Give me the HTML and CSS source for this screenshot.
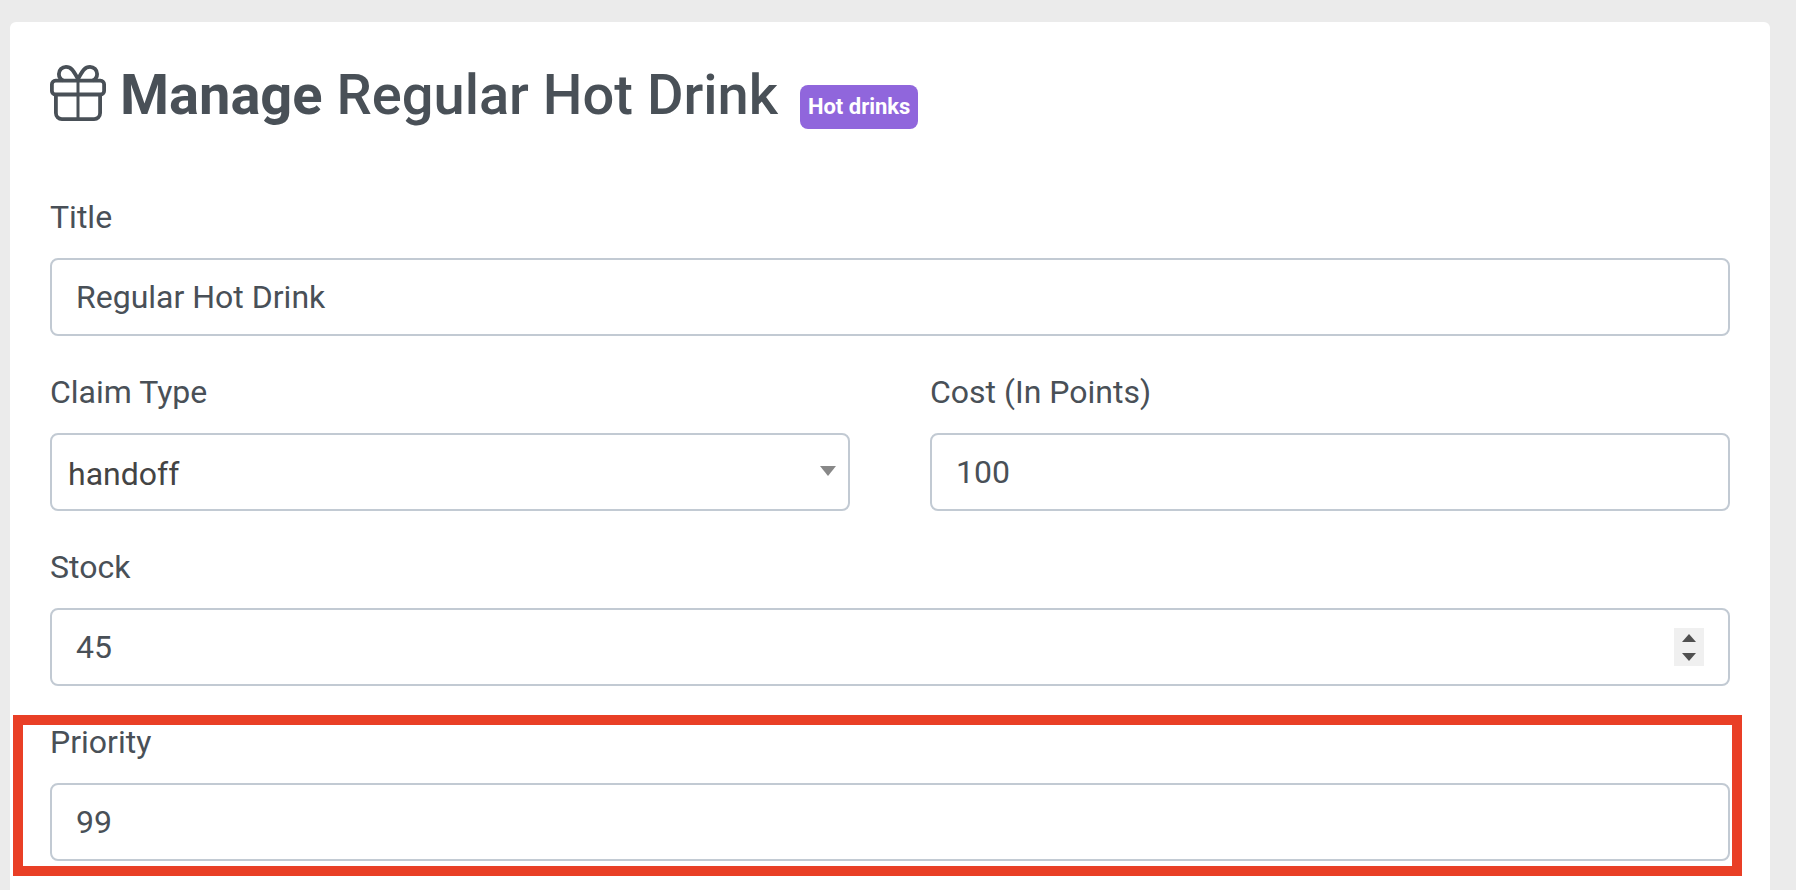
FILE: index.html
```html
<!DOCTYPE html>
<html lang="en">

<head>
    <meta charset="UTF-8">
    <meta name="viewport" content="width=device-width, initial-scale=1.0">
    <title>Manage Regular Hot Drink</title>
    <link rel="stylesheet" href="styles.css">
</head>

<body>
    <main class="card">
        <header class="card_header">
            <svg class="gift" viewBox="0 0 56 56" fill="none" stroke="currentColor" stroke-width="3.8" aria-hidden="true">
                <rect x="1.9" y="15.7" width="52.2" height="13.8" rx="3.6"/>
                <path d="M5.9 30v18.1a6 6 0 0 0 6 6h32.200a6 6 0 0 0 6-6V30"/>
                <path d="M28 13v41" stroke-width="3"/>
                <path d="M13 15.500C10.200 14 8.900 11.500 8.900 9c0-4 3.200-7.100 7.100-7.100 6 0 8 5.100 12 12.100 4-7 6-12.100 12-12.100 3.900 0 7.100 3.100 7.100 7.100 0 2.500-1.300 5-4.100 6.500"/>
            </svg>
            <h1><strong>Manage</strong> Regular Hot Drink</h1>
            <span class="badge">Hot drinks</span>
        </header>

        <form class="form" method="post">
            <div class="field">
                <label for="title">Title</label>
                <input type="text" id="title" name="title" value="Regular Hot Drink">
            </div>
            <div class="row">
                <div class="field">
                    <label for="claim_type">Claim Type</label>
                    <div class="control">
                        <select id="claim_type" name="claim_type">
                            <option selected>handoff</option>
                        </select>
                        <svg class="arrow" viewBox="0 0 16 10" aria-hidden="true"><path d="M0 0h16L8 10z"/></svg>
                    </div>
                </div>
                <div class="field">
                    <label for="cost">Cost (In Points)</label>
                    <input type="text" id="cost" name="cost" value="100">
                </div>
            </div>
            <div class="field">
                <label for="stock">Stock</label>
                <div class="control">
                    <input type="number" id="stock" name="stock" value="45">
                    <div class="spinner">
                        <button type="button" aria-label="Increase stock" onclick="stock.stepUp()">
                            <svg viewBox="0 0 14 8"><path d="M0 8h14L7 0z"/></svg>
                        </button>
                        <button type="button" aria-label="Decrease stock" onclick="stock.stepDown()">
                            <svg viewBox="0 0 14 8"><path d="M0 0h14L7 8z"/></svg>
                        </button>
                    </div>
                </div>
            </div>
            <div class="field highlight">
                <label for="priority">Priority</label>
                <input type="text" id="priority" name="priority" value="99">
            </div>
        </form>
    </main>
    <script>
        const stock = document.querySelector('#stock');
    </script>
</body>

</html>
```
FILE: styles.css
```css
* {
    box-sizing: border-box;
}

body {
    margin: 0;
    padding: 22px 26px 0 10px;
    min-height: 100vh;
    display: flex;
    background: #ebebeb;
    color: #495057;
    font-family: Roboto, Arial, sans-serif;
    font-size: 32px;
    line-height: 48px;
}

.card {
    flex: 1;
    padding: 37px 40px 28px;
    background: #fff;
    border-radius: 6px 6px 0 0;
}

.card_header {
    display: flex;
    align-items: center;
    margin-bottom: 62px;
}

.gift {
    width: 56px;
    height: 56px;
    margin-bottom: 4px;
}

h1 {
    margin: 0 22px 0 14px;
    font-size: 56px;
    font-weight: 500;
    line-height: 72px;
}

h1 strong {
    font-weight: 700;
}

.badge {
    margin-top: 24px;
    padding: 0 8px;
    border-radius: 8px;
    background: #9066dc;
    color: #fff;
    font-size: 22px;
    font-weight: 700;
    line-height: 44px;
}

.form {
    display: flex;
    flex-direction: column;
    gap: 32px;
}

.row {
    display: grid;
    grid-template-columns: 1fr 1fr;
    gap: 80px;
}

.field {
    display: flex;
    flex-direction: column;
    gap: 17px;
    position: relative;
}

.control {
    position: relative;
}

input,
select {
    display: block;
    width: 100%;
    height: 78px;
    padding: 0 24px;
    border: 2px solid #c2cad3;
    border-radius: 8px;
    background: #fff;
    color: inherit;
    font: inherit;
}

input:focus,
select:focus {
    outline: 0;
    border-color: #9066dc;
}

select {
    appearance: none;
    padding: 4px 16px 0;
    color: #444;
}

.arrow {
    position: absolute;
    top: 33px;
    right: 14px;
    width: 16px;
    height: 10px;
    fill: #888;
    pointer-events: none;
}

input[type="number"] {
    appearance: textfield;
}

.spinner {
    position: absolute;
    top: 20px;
    right: 26px;
    display: flex;
    flex-direction: column;
    width: 30px;
    height: 38px;
    background: #f0f0f0;
}

.spinner button {
    display: flex;
    flex: 1;
    align-items: center;
    justify-content: center;
    padding: 0;
    border: 0;
    background: none;
}

.spinner svg {
    width: 14px;
    height: 8px;
    fill: #505050;
}

/* red frame round the field */
.highlight::after {
    content: "";
    position: absolute;
    inset: -3px -12px -15px -37px;
    border: 10px solid #e93f26;
    pointer-events: none;
}
```
